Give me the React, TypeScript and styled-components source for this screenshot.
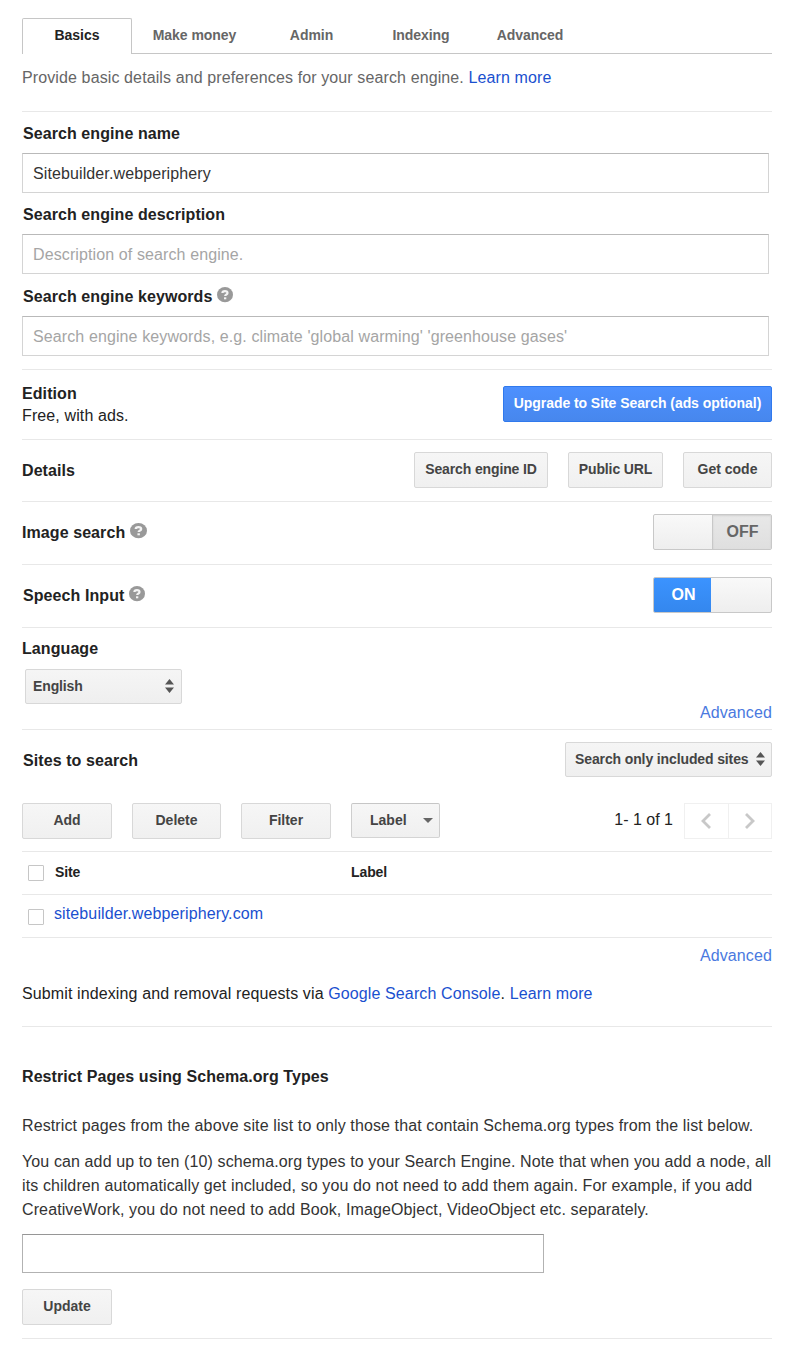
import React from 'react';
import styled, { createGlobalStyle, css } from 'styled-components';

const GlobalStyle = createGlobalStyle`
  * { box-sizing: border-box; }
  body {
    margin: 0;
    background: #fff;
    color: #222;
    font: 16px/20px "Liberation Sans", Arial, sans-serif;
    letter-spacing: 0.115px;
  }
  button, input { font-family: inherit; margin: 0; }
`;

const Page = styled.main`
  width: 750px;
  margin: 18px 0 0 22px;
`;

const TabBar = styled.nav`
  display: flex;
  height: 36px;
  border-bottom: 1px solid #c6c6c6;
`;

const Tab = styled.a<{ $active?: boolean; $width: number }>`
  width: ${p => p.$width}px;
  height: 36px;
  text-align: center;
  font-size: 14px;
  font-weight: bold;
  line-height: 34px;
  letter-spacing: -0.04px;
  color: #666;
  ${p => p.$active && css`
    color: #222;
    background: #fff;
    border: 1px solid #c6c6c6;
    border-bottom: 0;
    border-radius: 2px 2px 0 0;
    line-height: 32px;
    letter-spacing: 0;
  `}
`;

const Section = styled.section<{ $height: number; $top?: number }>`
  height: ${p => p.$height}px;
  padding-top: ${p => p.$top ?? 0}px;
  border-bottom: 1px solid #e8e8e8;
`;

const SettingRow = styled(Section)`
  display: flex;
  justify-content: space-between;
  align-items: flex-start;
`;

const Intro = styled.p`
  margin: 0;
  color: #666;
`;

const Link = styled.a<{ $soft?: boolean }>`
  color: ${p => (p.$soft ? '#4a79e0' : '#1a50cf')};
`;

const Heading = styled.h2<{ $indent?: boolean; $top?: number }>`
  display: flex;
  margin: ${p => p.$top ?? 0}px 0 0;
  padding-left: ${p => (p.$indent ? 1 : 0)}px;
  font-size: 16px;
  line-height: 20px;
  font-weight: bold;
  letter-spacing: 0.08px;
`;

const HelpSvg = styled.svg<{ $wide?: boolean }>`
  margin-left: 5px;
  width: ${p => (p.$wide ? 17 : 16)}px;
  height: 16px;
`;

const Edition = styled.div`
  margin-top: -2px;
`;

const EditionNote = styled.div`
  margin-top: 2px;
`;

const Field = styled.div`
  display: flex;
  flex-direction: column;
  gap: 9px;
  & + & { margin-top: 12px; }
  & + & + & { margin-top: 13px; }
`;

const TextInput = styled.input`
  width: 747px;
  height: 40px;
  padding: 1px 10px 0;
  border: 1px solid #d4d4d4;
  border-top-color: #b9b9b9;
  border-radius: 0;
  font-size: 16px;
  letter-spacing: 0.11px;
  color: #333;
  background: #fff;
  &::placeholder { color: #a5a5a5; opacity: 1; }
`;

const SchemaInput = styled(TextInput)`
  display: block;
  width: 522px;
  height: 39px;
  margin-top: 12px;
  border-color: #b2b2b2;
  border-top-color: #969696;
`;

const Button = styled.button<{ $width: number; $primary?: boolean; $tight?: boolean }>`
  width: ${p => p.$width}px;
  height: 36px;
  padding: 0 0 2px;
  border: 1px solid #d8d8d8;
  border-radius: 2px;
  background: linear-gradient(#f6f6f6, #f0f0f0);
  color: #444;
  font-size: 14px;
  font-weight: bold;
  letter-spacing: ${p => (p.$tight ? -0.13 : 0)}px;
  white-space: nowrap;
  ${p => p.$primary && css`
    border-color: #3079ed;
    background: linear-gradient(#4d90fe, #4787ed);
    color: #fff;
    letter-spacing: -0.06px;
  `}
`;

const ButtonGroup = styled.div`
  display: flex;
  gap: 20px;
`;

const Toggle = styled.div`
  display: flex;
  width: 119px;
  height: 36px;
  border: 1px solid #c8c8c8;
  border-radius: 2px;
  background: linear-gradient(#f9f9f9, #eee);
  overflow: hidden;
`;

const ToggleHalf = styled.span<{ $state: 'on' | 'off' }>`
  width: ${p => (p.$state === 'on' ? 57 : 59)}px;
  height: 34px;
  line-height: 33px;
  text-align: center;
  font-weight: bold;
  letter-spacing: 0;
  ${p => p.$state === 'on' ? css`
    margin-right: auto;
    padding-left: 2px;
    color: #fff;
    background: linear-gradient(#3b93ff, #3487ee);
  ` : css`
    margin-left: auto;
    padding-left: 1px;
    color: #666;
    border-left: 1px solid #c8c8c8;
    background: linear-gradient(#e8e8e8, #dfdfdf);
    box-shadow: inset 0 1px 2px rgba(0, 0, 0, 0.1);
  `}
`;

const Select = styled.button<{ $width: number }>`
  display: flex;
  justify-content: space-between;
  align-items: center;
  width: ${p => p.$width}px;
  height: 35px;
  padding: 0 6px 1px 9px;
  border: 1px solid #d8d8d8;
  border-radius: 2px;
  background: linear-gradient(#f5f5f5, #efefef);
  color: #444;
  font-size: 14px;
  font-weight: bold;
  letter-spacing: -0.12px;
  white-space: nowrap;
`;

const LanguageSelect = styled(Select)`
  margin: 10px 0 0 3px;
  padding-left: 7px;
  padding-right: 7px;
`;

const SitesHeader = styled.div`
  display: flex;
  justify-content: space-between;
`;

const RightLine = styled.div<{ $height: number }>`
  line-height: ${p => p.$height}px;
  text-align: right;
`;

const Toolbar = styled.div`
  display: flex;
  justify-content: space-between;
  margin-top: 26px;
`;

const MenuButton = styled(Button)`
  display: flex;
  align-items: center;
  justify-content: space-between;
  height: 35px;
  padding: 0 6px 1px 18px;
  border-color: #c6c6c6 #cecece #d4d4d4;
`;

const Pagination = styled.div`
  display: flex;
  line-height: 33px;
  letter-spacing: 0;
`;

const Pager = styled.div`
  display: flex;
  width: 88px;
  height: 36px;
  margin-left: 11px;
  border: 1px solid #f0f0f0;
`;

const PagerStep = styled.span`
  display: flex;
  flex: 1;
  align-items: center;
  justify-content: center;
  padding-right: 1px;
  & + & { border-left: 1px solid #f0f0f0; padding-right: 0; }
`;

const TableRow = styled.div<{ $head?: boolean }>`
  display: grid;
  grid-template-columns: 32px 297px 1fr;
  align-items: start;
  height: 43px;
  padding-top: ${p => (p.$head ? 10 : 9)}px;
  border-bottom: 1px solid #e8e8e8;
  ${p => p.$head && css`
    font-size: 14px;
    font-weight: bold;
    letter-spacing: -0.1px;
    & > span { padding-left: 1px; }
    & > span:last-child { padding-left: 0; }
  `}
`;

const Checkbox = styled.input.attrs({ type: 'checkbox' })<{ $top: number }>`
  appearance: none;
  width: 16px;
  height: 16px;
  margin: ${p => p.$top}px 0 0 6px;
  border: 1px solid #c6c6c6;
  border-radius: 1px;
  background: #fff;
`;

const Submit = styled.p`
  margin: 18px 0 0;
`;

const Paragraph = styled.p<{ $top: number }>`
  margin: ${p => p.$top}px 0 0;
  line-height: 24px;
  color: #333;
  white-space: nowrap;
`;

const UpdateButton = styled(Button)`
  display: block;
  margin-top: 16px;
`;

const HelpIcon = ({ wide }: { wide?: boolean }) => (
  <HelpSvg $wide={wide} viewBox="0 0 16 16" preserveAspectRatio="none">
    <ellipse cx="8" cy="7.7" rx="8" ry="7.6" fill="#999" />
    <path d="M5.4 6.1C5.4 3.5 10.5 3.3 10.5 6c0 1.7-2.3 1.6-2.3 3.1" fill="none" stroke="#f4f4f4" strokeWidth="2.2" />
    <path d="M7 10.3h2.3v2H7z" fill="#f4f4f4" />
  </HelpSvg>
);

const UpDown = () => (
  <svg width="9" height="14" viewBox="0 0 9 14" fill="#555">
    <path d="M0 5.5 4.5 0 9 5.5zM0 8.5h9L4.5 14z" />
  </svg>
);

const Chevron = ({ d }: { d: string }) => (
  <svg width="12" height="16" viewBox="0 0 12 16" fill="none" stroke="#c8c8c8" strokeWidth="2.8">
    <path d={d} />
  </svg>
);

export default function App() {
  return (
    <>
      <GlobalStyle />
      <Page>
        <TabBar>
          <Tab $active $width={110}>Basics</Tab>
          <Tab $width={125}>Make money</Tab>
          <Tab $width={109}>Admin</Tab>
          <Tab $width={110}>Indexing</Tab>
          <Tab $width={108}>Advanced</Tab>
        </TabBar>
        <Section $height={58} $top={14}>
          <Intro>
            Provide basic details and preferences for your search engine. <Link>Learn more</Link>
          </Intro>
        </Section>

        <Section $height={258} $top={12}>
          <Field>
            <Heading $indent>Search engine name</Heading>
            <TextInput defaultValue="Sitebuilder.webperiphery" />
          </Field>
          <Field>
            <Heading $indent>Search engine description</Heading>
            <TextInput placeholder="Description of search engine." />
          </Field>
          <Field>
            <Heading $indent>Search engine keywords<HelpIcon /></Heading>
            <TextInput placeholder="Search engine keywords, e.g. climate 'global warming' 'greenhouse gases'" />
          </Field>
        </Section>

        <SettingRow $height={70} $top={16}>
          <Edition>
            <Heading>Edition</Heading>
            <EditionNote>Free, with ads.</EditionNote>
          </Edition>
          <Button $primary $width={269}>Upgrade to Site Search (ads optional)</Button>
        </SettingRow>

        <SettingRow $height={62} $top={12}>
          <Heading $top={9}>Details</Heading>
          <ButtonGroup>
            <Button $tight $width={134}>Search engine ID</Button>
            <Button $tight $width={95}>Public URL</Button>
            <Button $width={89}>Get code</Button>
          </ButtonGroup>
        </SettingRow>

        <SettingRow $height={63} $top={12}>
          <Heading $top={9}>Image search<HelpIcon wide /></Heading>
          <Toggle><ToggleHalf $state="off">OFF</ToggleHalf></Toggle>
        </SettingRow>

        <SettingRow $height={63} $top={12}>
          <Heading $indent $top={9}>Speech Input<HelpIcon /></Heading>
          <Toggle><ToggleHalf $state="on">ON</ToggleHalf></Toggle>
        </SettingRow>

        <Section $height={102} $top={11}>
          <Heading>Language</Heading>
          <LanguageSelect $width={157}>English<UpDown /></LanguageSelect>
          <RightLine $height={18}><Link $soft>Advanced</Link></RightLine>
        </Section>

        <Section $height={122} $top={12}>
          <SitesHeader>
            <Heading $indent $top={9}>Sites to search</Heading>
            <Select $width={207}>Search only included sites<UpDown /></Select>
          </SitesHeader>
          <Toolbar>
            <ButtonGroup>
              <Button $width={90}>Add</Button>
              <Button $width={89}>Delete</Button>
              <Button $width={90}>Filter</Button>
              <MenuButton $width={89}>
                Label
                <svg width="10" height="5" viewBox="0 0 10 5"><path d="M0 0h10L5 5z" fill="#666" /></svg>
              </MenuButton>
            </ButtonGroup>
            <Pagination>
              <span>1- 1 of 1</span>
              <Pager>
                <PagerStep><Chevron d="M10 1 3 8l7 7" /></PagerStep>
                <PagerStep><Chevron d="m2 1 7 7-7 7" /></PagerStep>
              </Pager>
            </Pagination>
          </Toolbar>
        </Section>

        <TableRow $head>
          <Checkbox $top={3} />
          <span>Site</span>
          <span>Label</span>
        </TableRow>
        <TableRow>
          <Checkbox $top={5} />
          <Link>sitebuilder.webperiphery.com</Link>
        </TableRow>

        <Section $height={89} $top={8}>
          <RightLine $height={20}><Link $soft>Advanced</Link></RightLine>
          <Submit>
            Submit indexing and removal requests via <Link>Google Search Console</Link>. <Link>Learn more</Link>
          </Submit>
        </Section>

        <Section $height={312} $top={40}>
          <Heading>Restrict Pages using Schema.org Types</Heading>
          <Paragraph $top={27}>
            Restrict pages from the above site list to only those that contain Schema.org types from the list below.
          </Paragraph>
          <Paragraph $top={12}>
            You can add up to ten (10) schema.org types to your Search Engine. Note that when you add a node, all
            <br />
            its children automatically get included, so you do not need to add them again. For example, if you add
            <br />
            CreativeWork, you do not need to add Book, ImageObject, VideoObject etc. separately.
          </Paragraph>
          <SchemaInput />
          <UpdateButton $width={90}>Update</UpdateButton>
        </Section>
      </Page>
    </>
  );
}
